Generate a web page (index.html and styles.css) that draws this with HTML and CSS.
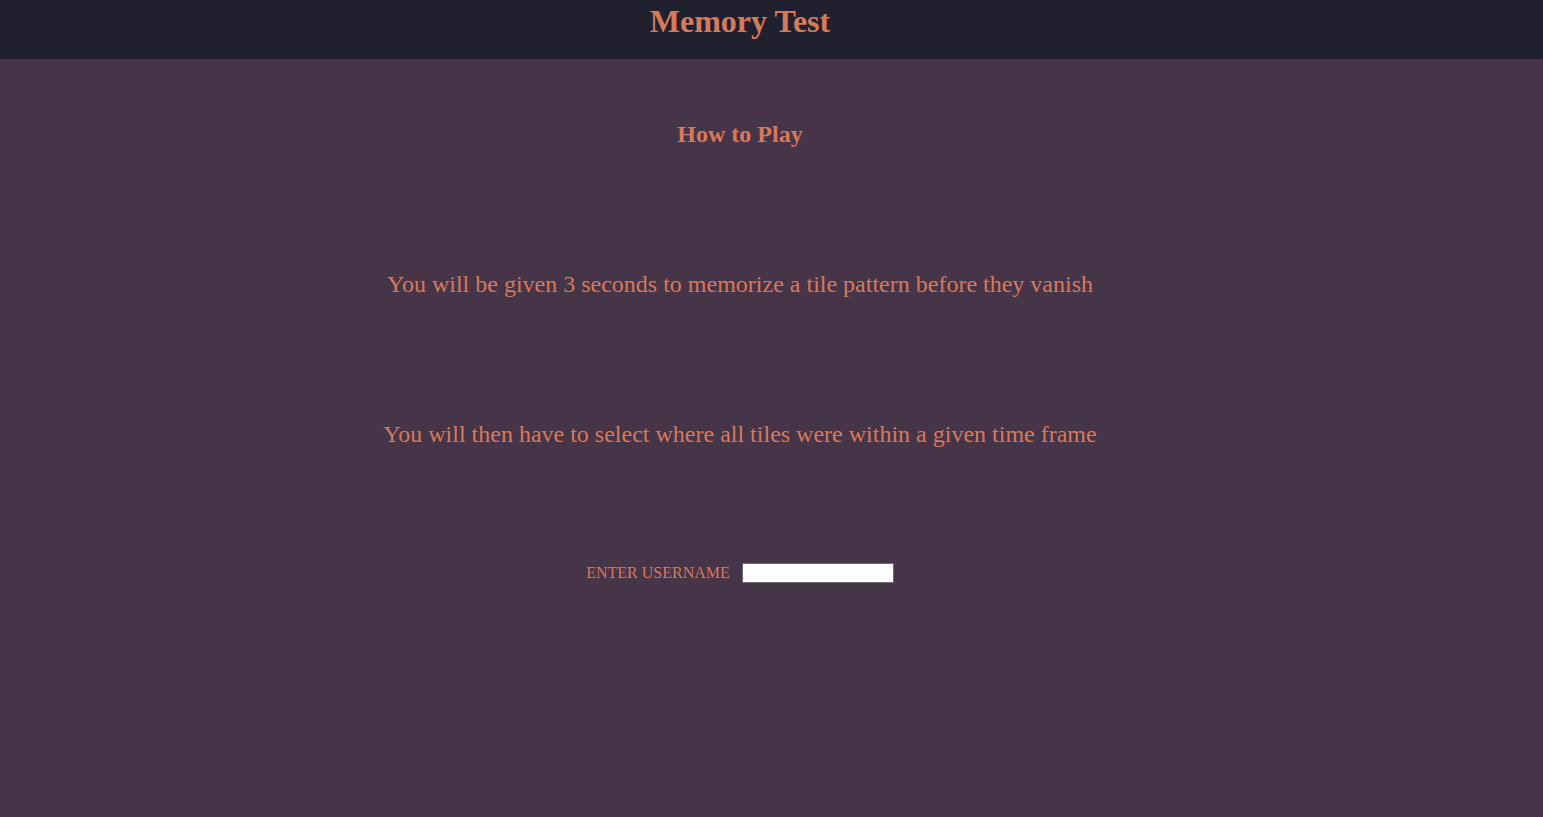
FILE: index.html
```html
<!DOCTYPE html>
<html lang="en">
<head>
<meta charset="utf-8">
<title>Memory Test</title>
<link rel="stylesheet" href="styles.css">
</head>
<body>
<header class="topbar">
  <div class="wrap">
    <h1 class="title">Memory Test</h1>
  </div>
</header>
<main class="content">
  <div class="wrap">
    <h2 class="subtitle">How to Play</h2>
    <p class="rule rule-first">You will be given 3 seconds to memorize a tile pattern before they vanish</p>
    <p class="rule">You will then have to select where all tiles were within a given time frame</p>
    <form class="user-row">
      <label class="user-label" for="username">ENTER USERNAME</label>
      <input class="user-input" id="username" type="text">
    </form>
  </div>
</main>
</body>
</html>
```
FILE: styles.css
```css
html, body {
  margin: 0;
  padding: 0;
  height: 100%;
}
body {
  background: #463448;
  font-family: "Liberation Serif", "Times New Roman", serif;
  color: #d67a5c;
}
.wrap {
  width: 1480px;
  display: flex;
  flex-direction: column;
  align-items: center;
}
.topbar {
  background: #21202e;
  height: 59px;
}
.title {
  margin: 0;
  padding-top: 3px;
  font-size: 32px;
  font-weight: bold;
  line-height: normal;
}
.content {
  padding-top: 62px;
}
.subtitle {
  margin: 0;
  font-size: 24px;
  font-weight: bold;
  line-height: normal;
}
.rule {
  margin: 123px 0 0;
  font-size: 24px;
  line-height: normal;
}
.user-row {
  margin-top: 115px;
  display: flex;
  align-items: center;
  gap: 12px;
}
.user-label {
  font-size: 16px;
}
.user-input {
  box-sizing: border-box;
  width: 152px;
  height: 20px;
  margin: 0;
  padding: 1px 2px;
  background: #fff;
  border: 1px solid #6e6a70;
  font-size: 13px;
}
```
